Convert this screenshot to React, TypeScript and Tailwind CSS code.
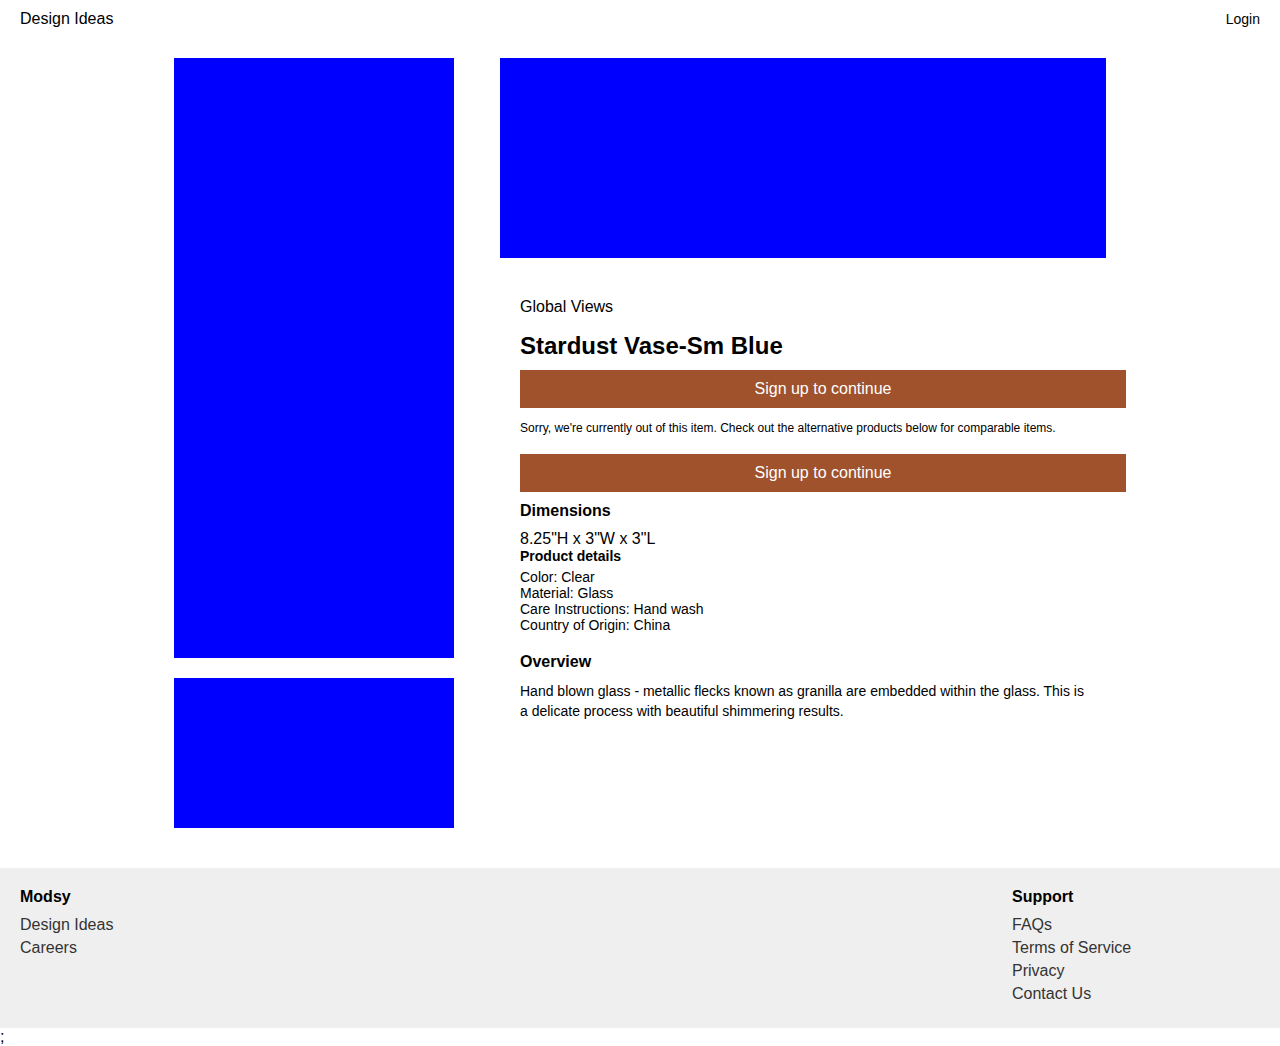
import React from "react";

export default function App() {
  const details = [
    "Color: Clear",
    "Material: Glass",
    "Care Instructions: Hand wash",
    "Country of Origin: China",
  ];

  const footerCols = [
    { title: "Modsy", links: ["Design Ideas", "Careers"], width: "w-auto" },
    {
      title: "Support",
      links: ["FAQs", "Terms of Service", "Privacy", "Contact Us"],
      width: "w-[248px]",
    },
  ];

  return (
    <div className="font-['Liberation_Sans',Arial,sans-serif] text-black bg-white">
      <header className="flex justify-between items-baseline px-5 pt-[10px] h-[38px]">
        <a className="text-base leading-[18px]">Design Ideas</a>
        <a className="text-sm leading-4">Login</a>
      </header>

      <main className="flex justify-center gap-[46px] mt-5 mb-10">
        <div className="w-[280px] flex flex-col gap-5 shrink-0">
          <div className="h-[600px] bg-[#0000ff]" />
          <div className="h-[150px] bg-[#0000ff]" />
        </div>

        <div className="w-[606px] shrink-0">
          <div className="h-[200px] bg-[#0000ff]" />
          <div className="w-[626px] pl-5 pt-10">
            <p className="text-base leading-[18px] mb-4">Global Views</p>
            <h1 className="text-2xl leading-[28px] font-bold mb-[10px]">
              Stardust Vase-Sm Blue
            </h1>
            <button className="w-[606px] h-[38px] bg-[#a0522d] text-white text-base">
              Sign up to continue
            </button>
            <p className="text-xs leading-[14px] mt-[13px] mb-[19px]">
              Sorry, we're currently out of this item. Check out the alternative
              products below for comparable items.
            </p>
            <button className="w-[606px] h-[38px] bg-[#a0522d] text-white text-base">
              Sign up to continue
            </button>
            <h3 className="text-base leading-[18px] font-bold mt-[10px]">Dimensions</h3>
            <p className="text-base leading-[18px] mt-[10px]">8.25"H x 3"W x 3"L</p>
            <h4 className="text-sm leading-4 font-bold">Product details</h4>
            <ul className="text-sm leading-4 mt-[5px]">
              {details.map((d) => (
                <li key={d}>{d}</li>
              ))}
            </ul>
            <h3 className="text-base leading-[18px] font-bold mt-5">Overview</h3>
            <p className="text-sm leading-5 mt-[10px] w-[570px]">
              Hand blown glass - metallic flecks known as granilla are embedded
              within the glass. This is a delicate process with beautiful
              shimmering results.
            </p>
          </div>
        </div>
      </main>

      <footer className="bg-[#efefef] h-[160px] flex justify-between px-5 pt-5">
        {footerCols.map((col) => (
          <div key={col.title} className={col.width}>
            <h4 className="text-base leading-[18px] font-bold mb-[7px]">{col.title}</h4>
            <ul className="text-base leading-[23px] text-[#333333]">
              {col.links.map((l) => (
                <li key={l}>{l}</li>
              ))}
            </ul>
          </div>
        ))}
      </footer>
      <div className="text-base leading-[18px]">;</div>
    </div>
  );
}
